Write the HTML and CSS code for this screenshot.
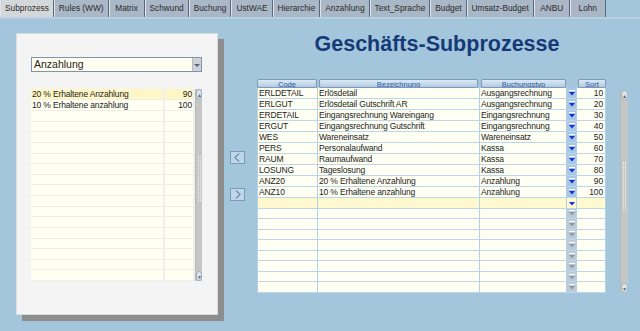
FILE: index.html
```html
<!DOCTYPE html>
<html lang="de">
<head>
  <meta charset="UTF-8">
  <title>Geschäfts-Subprozesse</title>
  <link rel="stylesheet" href="styles.css">
</head>
<body>
  <div class="tabs">
    <div class="tab active">Subprozess</div>
    <div class="tab">Rules (WW)</div>
    <div class="tab">Matrix</div>
    <div class="tab">Schwund</div>
    <div class="tab">Buchung</div>
    <div class="tab">UstWAE</div>
    <div class="tab">Hierarchie</div>
    <div class="tab">Anzahlung</div>
    <div class="tab">Text_Sprache</div>
    <div class="tab">Budget</div>
    <div class="tab">Umsatz-Budget</div>
    <div class="tab">ANBU</div>
    <div class="tab">Lohn</div>
  </div>

  <div class="main">
    <!-- left card: type filter + list -->
    <div class="panel">
      <div class="select">
        <span>Anzahlung</span>
        <div class="select-btn"><svg viewBox="0 0 8 8"><path d="M1 3h6L4 6z" fill="#4c6a8c"/></svg></div>
      </div>
      <div class="list">
        <div class="list-rows">
          <div class="lrow sel"><div>20 % Erhaltene Anzahlung</div><div class="num">90</div></div>
          <div class="lrow"><div>10 % Erhaltene anzahlung</div><div class="num">100</div></div>
          <div class="lrow"><div></div><div></div></div>
          <div class="lrow"><div></div><div></div></div>
          <div class="lrow"><div></div><div></div></div>
          <div class="lrow"><div></div><div></div></div>
          <div class="lrow"><div></div><div></div></div>
          <div class="lrow"><div></div><div></div></div>
          <div class="lrow"><div></div><div></div></div>
          <div class="lrow"><div></div><div></div></div>
          <div class="lrow"><div></div><div></div></div>
          <div class="lrow"><div></div><div></div></div>
          <div class="lrow"><div></div><div></div></div>
          <div class="lrow"><div></div><div></div></div>
          <div class="lrow"><div></div><div></div></div>
          <div class="lrow"><div></div><div></div></div>
          <div class="lrow"><div></div><div></div></div>
          <div class="lrow"><div></div><div></div></div>
        </div>
        <div class="vs small">
          <div class="vs-btn up">&#9650;</div>
          <div class="vs-thumb thumb-left"></div>
          <div class="vs-btn down">&#9660;</div>
        </div>
      </div>
    </div>

    <div class="right">
      <h1 class="title">Geschäfts-Subprozesse</h1>
      <div class="work">
        <div class="arrows">
          <div class="nav"><svg viewBox="0 0 13 11"><path d="M8 1.5L4 5.5l4 4" fill="none" stroke="#4a4a4a" stroke-width="1"/></svg></div>
          <div class="nav"><svg viewBox="0 0 13 11"><path d="M5 1.5l4 4-4 4" fill="none" stroke="#4a4a4a" stroke-width="1"/></svg></div>
        </div>

        <div class="grid">
          <div class="head">
            <div class="h">Code</div>
            <div class="h">Bezeichnung</div>
            <div class="h">Buchungstyp</div>
            <div></div>
            <div class="h">Sort</div>
          </div>
          <div class="rows">
            <div class="row"><div>ERLDETAIL</div><div>Erlösdetail</div><div>Ausgangsrechnung</div><div class="dd"><svg viewBox="0 0 8 8"><rect x="1" y="1" width="6" height="1"/><path d="M1 3h6L4 6.5z"/></svg></div><div class="num">10</div></div>
            <div class="row"><div>ERLGUT</div><div>Erlösdetail Gutschrift AR</div><div>Ausgangsrechnung</div><div class="dd"><svg viewBox="0 0 8 8"><rect x="1" y="1" width="6" height="1"/><path d="M1 3h6L4 6.5z"/></svg></div><div class="num">20</div></div>
            <div class="row"><div>ERDETAIL</div><div>Eingangsrechnung Wareingang</div><div>Eingangsrechnung</div><div class="dd"><svg viewBox="0 0 8 8"><rect x="1" y="1" width="6" height="1"/><path d="M1 3h6L4 6.5z"/></svg></div><div class="num">30</div></div>
            <div class="row"><div>ERGUT</div><div>Eingangsrechnung Gutschrift</div><div>Eingangsrechnung</div><div class="dd"><svg viewBox="0 0 8 8"><rect x="1" y="1" width="6" height="1"/><path d="M1 3h6L4 6.5z"/></svg></div><div class="num">40</div></div>
            <div class="row"><div>WES</div><div>Wareneinsatz</div><div>Wareneinsatz</div><div class="dd"><svg viewBox="0 0 8 8"><rect x="1" y="1" width="6" height="1"/><path d="M1 3h6L4 6.5z"/></svg></div><div class="num">50</div></div>
            <div class="row"><div>PERS</div><div>Personalaufwand</div><div>Kassa</div><div class="dd"><svg viewBox="0 0 8 8"><rect x="1" y="1" width="6" height="1"/><path d="M1 3h6L4 6.5z"/></svg></div><div class="num">60</div></div>
            <div class="row"><div>RAUM</div><div>Raumaufwand</div><div>Kassa</div><div class="dd"><svg viewBox="0 0 8 8"><rect x="1" y="1" width="6" height="1"/><path d="M1 3h6L4 6.5z"/></svg></div><div class="num">70</div></div>
            <div class="row"><div>LOSUNG</div><div>Tageslosung</div><div>Kassa</div><div class="dd"><svg viewBox="0 0 8 8"><rect x="1" y="1" width="6" height="1"/><path d="M1 3h6L4 6.5z"/></svg></div><div class="num">80</div></div>
            <div class="row"><div>ANZ20</div><div>20 % Erhaltene Anzahlung</div><div>Anzahlung</div><div class="dd"><svg viewBox="0 0 8 8"><rect x="1" y="1" width="6" height="1"/><path d="M1 3h6L4 6.5z"/></svg></div><div class="num">90</div></div>
            <div class="row"><div>ANZ10</div><div>10 % Erhaltene anzahlung</div><div>Anzahlung</div><div class="dd"><svg viewBox="0 0 8 8"><rect x="1" y="1" width="6" height="1"/><path d="M1 3h6L4 6.5z"/></svg></div><div class="num">100</div></div>
            <div class="row new"><div></div><div></div><div></div><div class="dd"><svg viewBox="0 0 8 8"><rect x="1" y="1" width="6" height="1"/><path d="M1 3h6L4 6.5z"/></svg></div><div></div></div>
            <div class="row"><div></div><div></div><div></div><div class="dd off"><svg viewBox="0 0 8 8"><rect x="1" y="1" width="6" height="1"/><path d="M1 3h6L4 6.5z"/></svg></div><div></div></div>
            <div class="row"><div></div><div></div><div></div><div class="dd off"><svg viewBox="0 0 8 8"><rect x="1" y="1" width="6" height="1"/><path d="M1 3h6L4 6.5z"/></svg></div><div></div></div>
            <div class="row"><div></div><div></div><div></div><div class="dd off"><svg viewBox="0 0 8 8"><rect x="1" y="1" width="6" height="1"/><path d="M1 3h6L4 6.5z"/></svg></div><div></div></div>
            <div class="row"><div></div><div></div><div></div><div class="dd off"><svg viewBox="0 0 8 8"><rect x="1" y="1" width="6" height="1"/><path d="M1 3h6L4 6.5z"/></svg></div><div></div></div>
            <div class="row"><div></div><div></div><div></div><div class="dd off"><svg viewBox="0 0 8 8"><rect x="1" y="1" width="6" height="1"/><path d="M1 3h6L4 6.5z"/></svg></div><div></div></div>
            <div class="row"><div></div><div></div><div></div><div class="dd off"><svg viewBox="0 0 8 8"><rect x="1" y="1" width="6" height="1"/><path d="M1 3h6L4 6.5z"/></svg></div><div></div></div>
            <div class="row"><div></div><div></div><div></div><div class="dd off"><svg viewBox="0 0 8 8"><rect x="1" y="1" width="6" height="1"/><path d="M1 3h6L4 6.5z"/></svg></div><div></div></div>
            <div class="row"><div></div><div></div><div></div><div class="dd off"><svg viewBox="0 0 8 8"><rect x="1" y="1" width="6" height="1"/><path d="M1 3h6L4 6.5z"/></svg></div><div></div></div>
          </div>
        </div>

        <div class="vs big">
          <div class="vs-btn up">&#9650;</div>
          <div class="vs-thumb thumb-right"></div>
          <div class="vs-btn down">&#9660;</div>
        </div>
      </div>
    </div>
  </div>
</body>
</html>
```

FILE: styles.css
```css
* {
  box-sizing: border-box;
}
body {
  margin: 0;
  width: 640px;
  height: 331px;
  overflow: hidden;
  background-color: #a4c6dc;
  font-family: "Liberation Sans", Arial, sans-serif;
  color: #1e1e1e;
}

/* tab strip */
.tabs {
  display: flex;
  height: 19px;
  border-bottom: 2px solid #b6d0e2;
}
.tab {
  min-width: 36px;
  padding: 0 4px;
  font-size: 8.3px;
  line-height: 16px;
  text-align: center;
  white-space: nowrap;
  background-color: #a9b7c6;
  border-left: 1px solid #dfe5eb;
  border-right: 1px solid #56697d;
  color: #2b2b2b;
}
.tab.active {
  background-color: #d5d8db;
}

.main {
  display: flex;
  padding: 12px 0 0 16px;
}

/* left card */
.panel {
  width: 202px;
  height: 282px;
  margin-top: 2px;
  padding: 23px 15px 0 14px;
  background-color: #f4f4f4;
  border: 1px solid #dcdcdc;
  box-shadow: 6px 6px 0 #8d8d8d;
}
.select {
  display: flex;
  height: 15px;
  border: 1px solid #7d94aa;
  background-color: #fffff2;
}
.select span {
  flex: 1;
  font-size: 10.5px;
  line-height: 13px;
  padding-left: 2px;
}
.select-btn {
  width: 9px;
  background-color: #cfd1d3;
  border-left: 1px solid #b4bcc4;
  display: flex;
  align-items: center;
}
.select-btn svg {
  width: 8px;
  height: 8px;
}
.list {
  display: flex;
  height: 192px;
  margin-top: 17px;
}
.list-rows {
  width: 164px;
  display: grid;
  grid-template-rows: repeat(18, 1fr);
}
.lrow {
  display: grid;
  grid-template-columns: 134px 30px;
  font-size: 8.5px;
  letter-spacing: -0.15px;
  line-height: 10px;
  white-space: nowrap;
}
.lrow div {
  background-color: #fffff2;
  border-bottom: 1px solid #efefe8;
  border-right: 2px solid #f0f0f0;
  padding-left: 1px;
  overflow: hidden;
}
.lrow.sel div {
  background-color: #fff6c6;
}
.num {
  text-align: right;
  padding-right: 2px;
}
.lrow .num {
  padding-right: 1px;
}

/* scrollbars */
.vs {
  display: flex;
  flex-direction: column;
  justify-content: space-between;
  width: 7px;
  background-color: #c6c6c6;
  border-left: 1px solid #b8b8b8;
}
.vs.big {
  width: 8px;
  height: 203px;
  margin: 11px 0 0 14px;
}
.vs-btn {
  height: 10px;
  font-size: 5px;
  line-height: 10px;
  text-align: center;
  color: #4c6a8c;
  background-color: #dde3ea;
  border: 1px solid #9fb0c0;
  border-radius: 4px;
}
.vs-thumb {
  width: 3px;
  margin-left: 2px;
  border-left: 1px dotted #f4f4f4;
  border-right: 1px dotted #f4f4f4;
}
.thumb-left {
  height: 45px;
  margin-top: 57px;
  margin-bottom: auto;
}
.thumb-right {
  height: 48px;
  margin-top: 62px;
  margin-bottom: auto;
}

/* right side */
.right {
  flex: 1;
}
.title {
  margin: 0;
  height: 48px;
  padding-left: 16px;
  text-align: center;
  font-size: 21.5px;
  line-height: 26px;
  font-weight: bold;
  color: #163a78;
}
.work {
  display: flex;
}
.arrows {
  width: 39px;
  padding: 72px 0 0 12px;
  display: flex;
  flex-direction: column;
  gap: 24px;
}
.nav {
  width: 15px;
  height: 13px;
  border: 1px solid #7d9bb8;
  background-color: #bdd7ed;
}
.nav svg {
  display: block;
  width: 13px;
  height: 11px;
}

.grid {
  width: 349px;
}
.head,
.row {
  display: grid;
  grid-template-columns: 61px 162px 87px 10px 29px;
}
.head {
  height: 9px;
}
.h {
  margin: 0 1px 0 0;
  height: 9px;
  border: 1px solid #7f99b3;
  border-radius: 2px;
  background: linear-gradient(#dce9f5, #b2cbe2);
  color: #2a5aa8;
  font-size: 7.5px;
  line-height: 10px;
  text-align: center;
  overflow: hidden;
}
.head .h:nth-child(2) {
  margin: 0 2px 0 1px;
}
.head .h:nth-child(3) {
  margin: 0 1px 0 1px;
}
.head .h:nth-child(5) {
  margin: 0 0 0 1px;
}
.rows {
  height: 205px;
  display: grid;
  grid-template-rows: repeat(19, 1fr);
}
.row {
  font-size: 8.5px;
  letter-spacing: -0.15px;
  line-height: 10px;
  white-space: nowrap;
}
.row div {
  background-color: #fffff3;
  border-right: 1px solid #b3d0e6;
  border-bottom: 1px solid #bcd6ea;
  padding-left: 1px;
  overflow: hidden;
}
.row div:first-child {
  border-left: 1px solid #b3d0e6;
}
.row.new div {
  background-color: #fff9cf;
}
.row .dd {
  padding: 0;
  background-color: #a9c8e6;
  color: #1830d8;
  display: flex;
  align-items: center;
  justify-content: center;
}
.row .dd.off {
  background-color: #bccad6;
  color: #8a9cae;
}
.dd svg {
  width: 8px;
  height: 8px;
  fill: currentColor;
}
.dd svg rect {
  fill: #ffffff;
}
```
